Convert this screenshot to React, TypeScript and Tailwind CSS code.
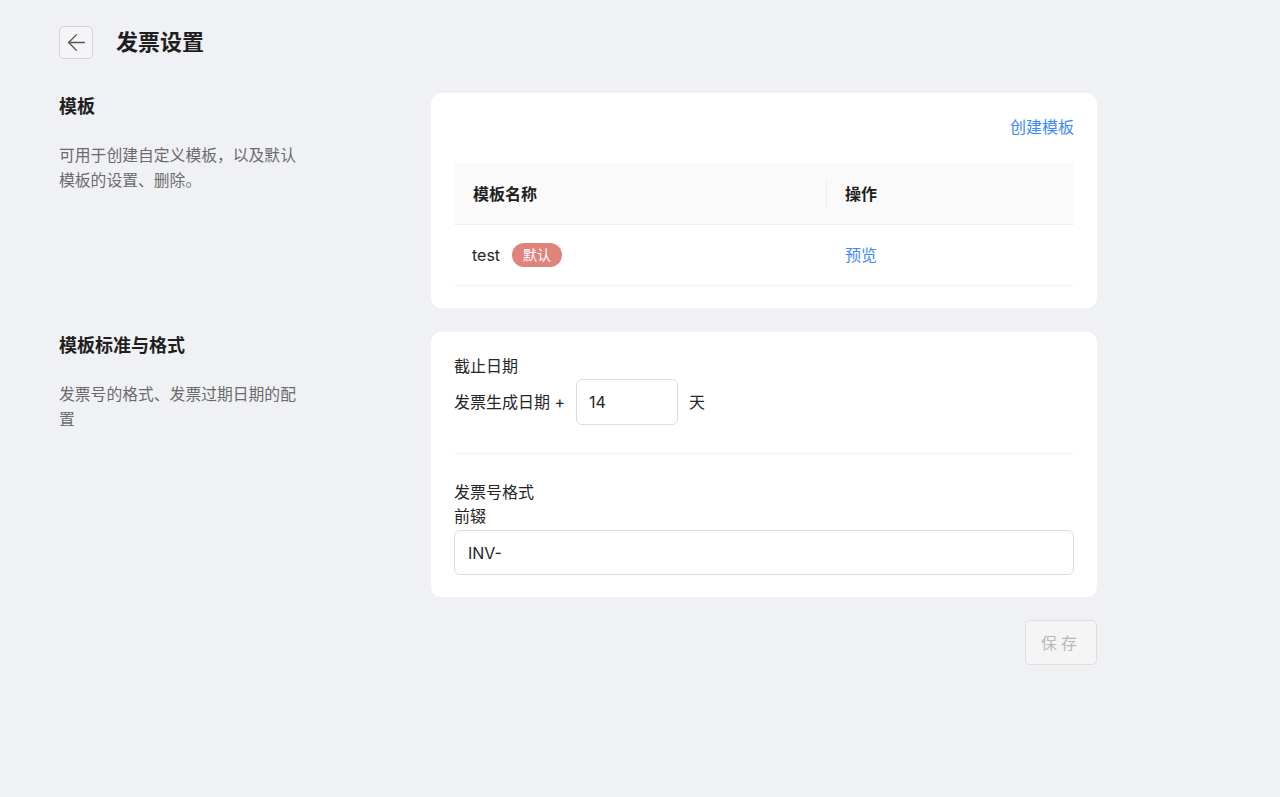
import { ArrowLeft } from "lucide-react";

const font = { fontFamily: '"Inter", "Noto Sans CJK SC", sans-serif' };

const Section = ({ title, desc, children }: { title: string; desc: string; children: React.ReactNode }) => (
  <div className="flex">
    <div className="w-[372px] shrink-0">
      <h2 className="text-[18px] leading-7 font-bold text-[#1f1f1f]">{title}</h2>
      <p className="mt-[22px] w-[240px] text-[15.8px] leading-[25px] text-[#6b6b6b]">{desc}</p>
    </div>
    <div className="w-[666px] rounded-[10px] bg-white px-[23px] pt-[22px] pb-[22px]">{children}</div>
  </div>
);

const InvoiceSettings = () => {
  return (
    <div className="min-h-screen bg-[#f0f1f5] pl-[59px] pt-[26px] text-[#262626]" style={font}>
      <div className="flex items-center gap-[23px]">
        <button className="flex h-[33px] w-[34px] items-center justify-center rounded-[5px] border border-[#d4d4d8] bg-[#f5f5f7] text-[#555]">
          <ArrowLeft size={27} strokeWidth={1.2} />
        </button>
        <h1 className="text-[22px] font-bold text-[#1f1f1f]">发票设置</h1>
      </div>

      <div className="mt-[34px] flex flex-col gap-[24px]">
        <Section title="模板" desc="可用于创建自定义模板，以及默认模板的设置、删除。">
          <div className="flex justify-end">
            <a className="text-[16px] leading-6 text-[#3b8af7]">创建模板</a>
          </div>
          <div className="mt-[24px]">
            <div className="flex h-[61px] items-center bg-[#fafafa] text-[16px] font-bold text-[#1f1f1f]">
              <div className="flex h-full w-[372px] items-center pl-[19px]">模板名称</div>
              <div className="h-[26px] w-px bg-[#ececec]" />
              <div className="pl-[18px]">操作</div>
            </div>
            <div className="flex h-[62px] items-center border-y border-[#f0f0f0] text-[16px]">
              <div className="flex w-[373px] items-center gap-[12px] pl-[18px]">
                <span>test</span>
                <span className="rounded-full bg-[#e0837a] px-[11px] py-[2px] text-[14px] leading-5 text-white">默认</span>
              </div>
              <a className="pl-[18px] text-[#3b8af7]">预览</a>
            </div>
          </div>
        </Section>

        <Section title="模板标准与格式" desc="发票号的格式、发票过期日期的配置">
          <div className="text-[16px] leading-6">截止日期</div>
          <div className="mt-px flex items-center text-[16px]">
            <span>发票生成日期 +</span>
            <input
              defaultValue="14"
              className="ml-[11px] h-[46px] w-[102px] rounded-[6px] border border-[#dcdcdc] px-[12px] text-[16px] outline-none"
            />
            <span className="ml-[11px]">天</span>
          </div>
          <div className="mt-[28px] h-px bg-[#f0f0f0]" />
          <div className="mt-[26px] text-[16px] leading-6">发票号格式</div>
          <div className="text-[16px] leading-6">前辍</div>
          <input
            defaultValue="INV-"
            className="mt-[2px] h-[45px] w-full rounded-[6px] border border-[#dcdcdc] px-[13px] text-[16px] outline-none"
          />
        </Section>
      </div>

      <div className="mt-[23px] flex w-[1038px] justify-end">
        <button className="h-[45px] w-[72px] rounded-[5px] border border-[#dedede] bg-[#f5f5f5] text-[16px] tracking-[4px] text-[#b8b8b8]">
          保存
        </button>
      </div>
    </div>
  );
};

export default InvoiceSettings;
